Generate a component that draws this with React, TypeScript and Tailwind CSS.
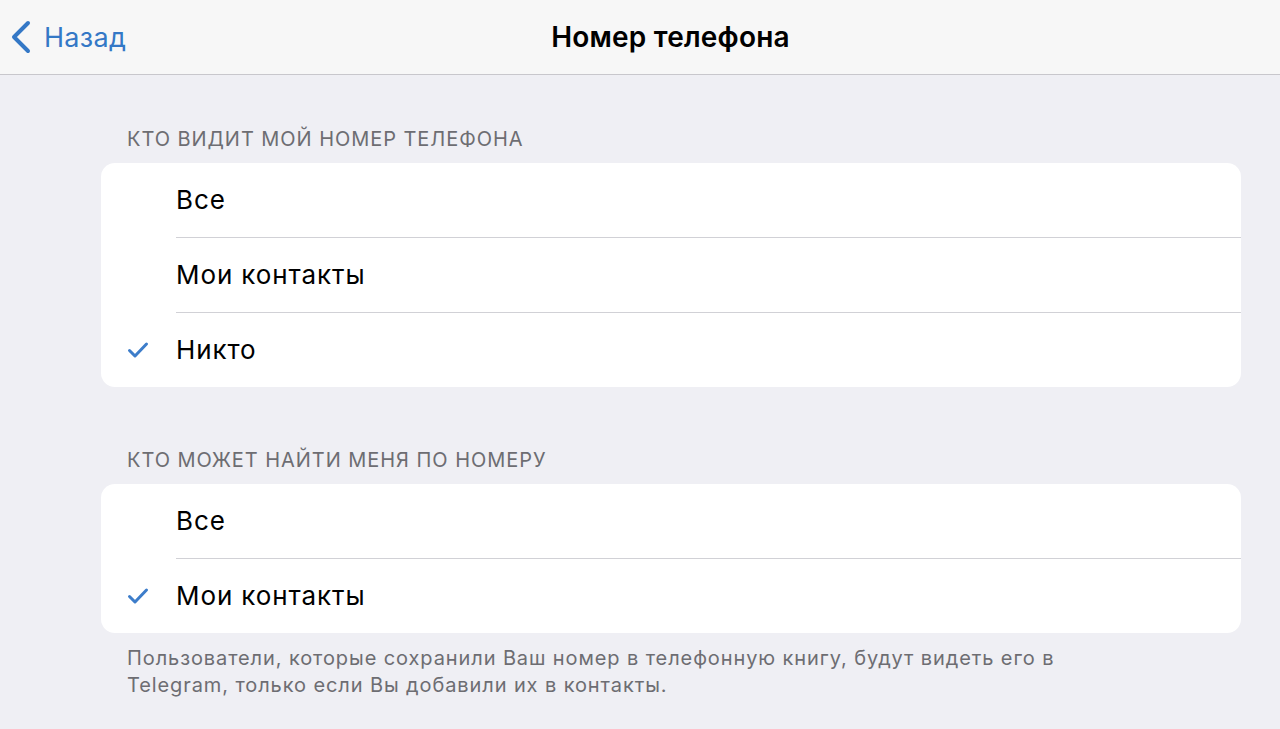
import React from 'react';

type Option = { label: string; checked?: boolean };

const Check: React.FC = () => (
  <svg className="w-[22px] h-[18px]" viewBox="0 0 22 18" fill="none" stroke="#3d7dca" strokeWidth="3" strokeLinecap="round" strokeLinejoin="round">
    <polyline points="2.5 9.5 8 15 19.5 3" />
  </svg>
);

const Group: React.FC<{ title?: string; options: Option[]; footer?: string[] }> = ({ title, options, footer }) => (
  <section>
    {title && (
      <h2 className="pl-[127px] pb-[11px] text-[20px] leading-[26px] uppercase text-[#6d6d72] tracking-[0.95px]">{title}</h2>
    )}
    <div className="ml-[101px] mr-[39px] bg-white rounded-[14px] overflow-hidden">
      {options.map((opt, i) => (
        <div key={opt.label} className="flex items-stretch">
          <div className="w-[75px] flex items-center justify-end pr-[27px] shrink-0">{opt.checked && <Check />}</div>
          <div
            className={`flex-1 flex items-center h-[74px] box-content text-[26px] tracking-[0.9px] text-black ${
              i < options.length - 1 ? 'border-b border-[#d1d1d6]' : ''
            }`}
          >
            <span className="-mt-[2px]">{opt.label}</span>
          </div>
        </div>
      ))}
    </div>
    {footer && (
      <p className="pl-[127px] pt-[12px] text-[20px] leading-[27px] tracking-[0.9px] text-[#6d6d72]">
        {footer.map((line) => (
          <span key={line} className="block">{line}</span>
        ))}
      </p>
    )}
  </section>
);

export default function App() {
  return (
    <div className="w-[1280px] h-[729px] overflow-hidden bg-[#efeff4] font-['Inter','Noto_Sans',sans-serif]">
      <header className="relative h-[75px] bg-[#f7f7f7] border-b border-[#c8c7cc] flex items-center justify-center pl-[61px]">
        <div className="absolute left-[10px] top-0 h-full flex items-center gap-[12px] text-[#3478c6]">
          <svg className="w-[22px] h-[34px]" viewBox="0 0 22 34" fill="none" stroke="currentColor" strokeWidth="4" strokeLinecap="round" strokeLinejoin="round">
            <polyline points="18 3 4 17 18 31" />
          </svg>
          <span className="text-[27px] leading-none tracking-[0.3px]">Назад</span>
        </div>
        <h1 className="text-[28px] font-semibold text-black leading-none tracking-[0.2px]">Номер телефона</h1>
      </header>

      <main className="pt-[51px] flex flex-col gap-[60px]">
        <Group
          title="Кто видит мой номер телефона"
          options={[{ label: 'Все' }, { label: 'Мои контакты' }, { label: 'Никто', checked: true }]}
        />
        <Group
          title="Кто может найти меня по номеру"
          options={[{ label: 'Все' }, { label: 'Мои контакты', checked: true }]}
          footer={[
            'Пользователи, которые сохранили Ваш номер в телефонную книгу, будут видеть его в',
            'Telegram, только если Вы добавили их в контакты.',
          ]}
        />
      </main>
    </div>
  );
}
